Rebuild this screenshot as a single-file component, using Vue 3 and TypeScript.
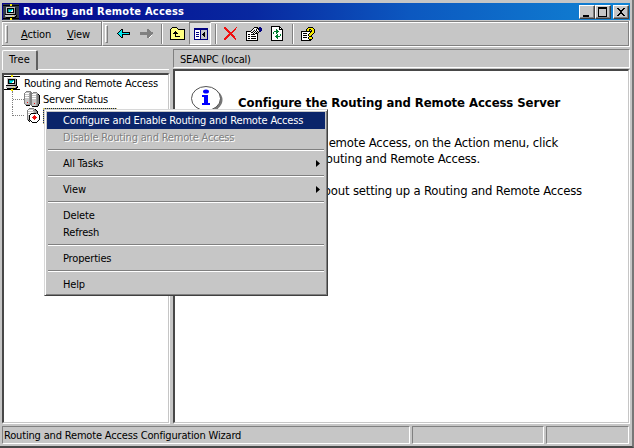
<script setup lang="ts">
import { defineComponent, h } from 'vue'

const palette: Record<string, string> = {
  k: '#000', w: '#fff', g: '#808080', l: '#c6c6c6', y: '#ffff80', Y: '#f5e900',
  c: '#00e8f0', r: '#f01010', b: '#000080', e: '#008030', t: '#009090', s: '#a0a0a0',
}

const icons: Record<string, string[]> = {
  root: [
    '.......YY.......', 'kkkkkkkYYkkkkkkk', '................', '...lllllllll....', '...lkkkkkkksk...',
    '...lkttttcksk...', '...lktcccwksk...', '...lktccwwksk...', '...lkkkkkkksk...', '...lllllllssk...',
    '..kkkkkkkkkkk...', '..lllllllllssk..', '..sllllllYlskk..', '...kkkkkkkkkk...', 'kkkkkkkYYkkkkkkk', '.......YY.......',
  ],
  servers: [
    '..ggggg.........', '.gllllgg.gggg...', 'gwwwwsgggllllg..', 'gllllsggwwwwsgk.', 'gwwwwsggllllsggk',
    'glllssggwwwwsggk', 'gwwwwsggllllsggk', 'gllllsggwwwwsggk', 'gllllsggllllsggk', 'gllllsggllllsggk',
    'gllllsggllllsggk', 'gllrlsggllllsggk', 'gllllsggllrlsggk', '.gssssggllllsgk.', '..kkkk.gllllsgk.', '........kkkkkk..',
  ],
  server: [
    '...ggggg......', '..glllllgk....', '.gwwwwwgsgk...', '.gllllllssgk..', '.gwwwwwlssgk..', '.glllkkkkkgk..',
    '.gwwkwwwwwwwk.', '.glkwwwwrwwwwk', '.glkwwwrrrwwwk', '.glkwwrrrrrwwk', '.glkwwwrrrwwwk', '.gskwwwwrwwwwk',
    '..kgkwwwwwwwk.', '...k.kwwwwwk..', '......kkkkk...',
  ],
  back: [
    '....kk.......', '...kck.......', '..kcck.......', '.kccckkkkkkkk', 'kccccccccccck', '.kccckkkkkkkk', '..kcck.......', '...kck.......', '....kk.......',
  ],
  forward: [
    '.......gg....', '.......ggg...', '.......gggg..', 'ggggggggggggg', 'ggggggggggggg', 'gggggggggggg.', '.......ggggw.', '.......gggw..', '.......ggw...',
  ],
  up: [
    '..kkkkk.........', '.kyyyyyk........', 'kyyyyyyykkkkkkk.', 'kyyyyyyyyyyyyyk.', 'kyyyykyyyyyyyyk.', 'kyyykkkyyyyyyyk.', 'kyykkkkkyyyyyyk.',
    'kyyyykyyyyyyyyk.', 'kyyyykyyyyyyyyk.', 'kyyyykkkkkyyyyk.', 'kyyyyyyyyyyyyyk.', 'kyyyyyyyyyyyyyk.', 'kkkkkkkkkkkkkkk.',
  ],
  panes: [
    'bbbbbbbbbbbbbb', 'bbbbbbbbbbbbbb', 'bwwwwwbllllllb', 'bwwwwwbllllllb', 'bwbbbwblllkllb', 'bwwwwwbllkkllb', 'bwbbbwblkkkllb',
    'bwwwwwbllkkllb', 'bwbbbwblllkllb', 'bwwwwwbllllllb', 'bwwwwwbllllllb', 'bbbbbbbbbbbbbb',
  ],
  remove: [
    'rr..........r', 'rrr........r.', '.rrr......rr.', '..rrr....rr..', '...rrr..rr...', '....rrrrr....', '.....rrr.....',
    '....rrrrr....', '...rrr.rrr...', '..rrr...rrr..', '.rrr.....rr..', 'rrr.......rr.', 'rr.........r.',
  ],
  properties: [
    '........kkkk.bb.', '.......kwwlkkbbb', '......kwlwkwkbbb', '.....kwlkwkwlbbb', 'kkkkkwlkwkwklkb.', 'kwwwwkkwkwklk...',
    'kwwwwwwkwkkk....', 'kwkkwkkkkwwk....', 'kwwwwwwwwwwk....', 'kwkkwkkkkkwk....', 'kwwwwwwwwwwk....', 'kwkkwkkkkkwk....', 'kwwwwwwwwwwk....', 'kkkkkkkkkkkk....',
  ],
  refresh: [
    'kkkkkkkkk....', 'kwwwwwwwkk...', 'kwwwwwwwkwk..', 'kwwwwewwkkkk.', 'kwwwweewwwwk.', 'kwweeeeewwwk.', 'kwewweewwwwk.', 'kwewwewwwwwk.',
    'kwwwwwewwewk.', 'kwwwweewwewk.', 'kwwweeeeewwk.', 'kwwwweewwwwk.', 'kwwwwwewwwwk.', 'kwwwwwwwwwwk.', 'kkkkkkkkkkkk.',
  ],
  help: [
    '.......kkkkk..', '......kYYYYYk.', '.....kYYkkYYYk', '.....kYYk.kYYk', 'kkkkkkkkkkkYYk', 'kwwwwwwwwkYYYk', 'kwkkkkwwkYYYk.',
    'kwwwwwwkYYYk..', 'kwkkkkwkYYk...', 'kwwwwwwwkkk...', 'kwkkkkwkYYYk..', 'kwwwwwwkYYYk..', 'kwwwwwwwkkk...', 'kkkkkkkkkk....',
  ],
}

const PixelIcon = defineComponent({
  props: { name: { type: String, required: true } },
  setup(props) {
    return () => {
      const rows = icons[props.name]
      const w = rows[0].length
      const cells = rows.flatMap((row, y) =>
        [...row].map((ch, x) => (ch === '.' ? null : h('rect', { x, y, width: 1, height: 1, fill: palette[ch] }))),
      )
      return h('svg', { width: w, height: rows.length, viewBox: `0 0 ${w} ${rows.length}`, 'shape-rendering': 'crispEdges' }, cells)
    }
  },
})

interface MenuEntry { label?: string; state?: 'active' | 'disabled'; sub?: boolean }
const menu: MenuEntry[] = [
  { label: 'Configure and Enable Routing and Remote Access', state: 'active' },
  { label: 'Disable Routing and Remote Access', state: 'disabled' },
  {},
  { label: 'All Tasks', sub: true },
  {},
  { label: 'View', sub: true },
  {},
  { label: 'Delete' },
  { label: 'Refresh' },
  {},
  { label: 'Properties' },
  {},
  { label: 'Help' },
]
</script>

<template>
  <div class="window">
    <header class="title">
      <PixelIcon name="root" class="app-icon" />
      <h1>Routing and Remote Access</h1>
      <div class="buttons">
        <button><svg width="12" height="10"><path d="M2 8h6v2H2z" /></svg></button>
        <button><svg width="12" height="10"><path fill-rule="evenodd" d="M1 0h9v10H1zM2 2v7h7V2z" /></svg></button>
        <button class="close"><svg width="12" height="10"><path d="M2 1h2v1h1v1h2V2h1V1h2v1H9v1H8v1H7v2h1v1h1v1h1v1H8V8H7V7H5v1H4v1H2V8h1V7h1V6h1V4H4V3H3V2H2z" /></svg></button>
      </div>
    </header>

    <div class="toolbar">
      <nav class="band menus">
        <i class="grip" />
        <span class="action"><u>A</u>ction</span>
        <span><u>V</u>iew</span>
      </nav>
      <div class="band tools">
        <i class="grip" />
        <PixelIcon name="back" class="t-back" />
        <PixelIcon name="forward" class="t-forward" />
        <i class="sep" />
        <PixelIcon name="up" class="t-up" />
        <span class="pressed"><PixelIcon name="panes" /></span>
        <i class="sep second" />
        <PixelIcon name="remove" class="t-remove" />
        <PixelIcon name="properties" class="t-props" />
        <PixelIcon name="refresh" class="t-refresh" />
        <i class="sep third" />
        <PixelIcon name="help" class="t-help" />
      </div>
    </div>

    <main class="body">
      <section class="left">
        <div class="tabs"><span class="tab">Tree</span><i class="rest" /></div>
        <div class="pane tree">
          <div class="node"><PixelIcon name="root" /><span class="root-label">Routing and Remote Access</span></div>
          <div class="node child"><i class="twig" /><PixelIcon name="servers" /><span>Server Status</span></div>
          <div class="node child last"><i class="twig" /><PixelIcon name="server" class="srv" /><span class="selected" /></div>
        </div>
      </section>
      <section class="right">
        <div class="caption">SEANPC (local)</div>
        <div class="pane detail">
          <div class="heading">
            <svg class="info" width="36" height="29" viewBox="0 0 36 29">
              <ellipse cx="18" cy="15" rx="14.500" ry="11.500" fill="#777" />
              <path d="M22 25l7 3-2-7z" fill="#777" />
              <ellipse cx="16" cy="13.500" rx="14.500" ry="12" fill="#fff" stroke="#555" />
              <ellipse cx="16" cy="6.500" rx="3" ry="2" fill="#00f" />
              <path d="M12 10h6v8h2v2h-8v-2h2v-6h-2z" fill="#00f" />
            </svg>
            <h2>Configure the Routing and Remote Access Server</h2>
          </div>
          <p class="l1">emote Access, on the Action menu, click</p>
          <p class="l2">outing and Remote Access.</p>
          <p class="l3">bout setting up a Routing and Remote Access</p>
        </div>
      </section>
    </main>

    <footer class="status">
      <span>Routing and Remote Access Configuration Wizard</span><span /><span />
    </footer>

    <div class="context">
      <template v-for="(item, i) in menu" :key="i">
        <div v-if="item.label" class="item" :class="item.state">
          <span>{{ item.label }}</span>
          <svg v-if="item.sub" width="4" height="7"><path d="M0 0l4 3.500-4 3.500z" /></svg>
        </div>
        <hr v-else />
      </template>
    </div>
  </div>
</template>

<style>
body { overflow: hidden; background: #c6c6c6; }
</style>

<style scoped>
* { box-sizing: border-box; margin: 0; }
svg { display: block; flex: none; }
.window {
  position: relative; width: 634px; height: 448px; padding: 3px 2px 2px 2px;
  display: flex; flex-direction: column; overflow: hidden;
  background: #c6c6c6; border-right: 2px solid #777; border-bottom: 2px solid #484848;
  font: 11px/17px "DejaVu Sans Condensed", "DejaVu Sans", sans-serif; letter-spacing: -0.16px; color: #000;
}
.title {
  flex: none; width: 628px; height: 17px; display: flex; align-items: center; color: #fff;
  background: linear-gradient(90deg, #04048c 0%, #0828a0 40%, #0c58c0 65%, #1084d4 100%);
}
.app-icon { margin-left: 1px; background: #303848; }
.title h1 { flex: 1; margin-left: 4px; font-size: 11px; line-height: 17px; letter-spacing: 0.22px; }
.buttons { display: flex; margin-right: 1px; }
.buttons button {
  width: 16px; height: 14px; padding: 1px; background: #c6c6c6; border: 1px solid; border-color: #fff #404040 #404040 #fff;
  box-shadow: inset -1px -1px #808080;
}
.buttons .close { margin-left: 2px; }
.toolbar { flex: none; display: flex; width: 628px; height: 26px; margin-top: 1px; border-bottom: 1px solid #fff; border-right: 1px solid #fff; }
.band { display: flex; align-items: center; border: 1px solid #808080; border-width: 1px 1px 1px 0; }
.menus { width: 100px; box-shadow: inset 1px 1px #fff; }
.menus span { padding-top: 1px; }
.tools { flex: 1; border-left: 1px solid #fff; box-shadow: inset 0 1px #fff; }
.grip { width: 3px; height: 18px; margin-left: 3px; flex: none; border: 1px solid; border-color: #fff #808080 #808080 #fff; }
.tools .grip { margin-left: 2px; }
.action { margin: 0 16px 0 13px; }
u { text-underline-offset: 1px; }
.t-back { margin-left: 9px; }
.t-forward { margin-left: 10px; }
.sep { width: 2px; height: 20px; margin-left: 8px; flex: none; border-left: 1px solid #808080; background: #fff; }
.t-up { margin-left: 7px; }
.pressed {
  width: 22px; height: 23px; margin-left: 3px; padding: 5px 0 0 4px; background: #dedede;
  border: 1px solid; border-color: #808080 #fff #fff #808080; flex: none;
}
.second { margin-left: 4px; }
.t-remove { margin-left: 7px; }
.t-props { margin-left: 9px; }
.t-refresh { margin-left: 9px; }
.third { margin-left: 8px; }
.t-help { margin-left: 7px; }
.body { flex: none; display: flex; gap: 4px; width: 629px; height: 374px; margin-top: 2px; }
.left { width: 167px; display: flex; flex-direction: column; }
.tabs { display: flex; height: 24px; padding-top: 1px; }
.tab {
  width: 36px; height: 20px; padding-left: 6px; line-height: 17px; border: 1px solid #fff; border-width: 1px 2px 0 1px;
  border-right-color: #606060; border-radius: 2px 2px 0 0; letter-spacing: 0.1px;
}
.rest { flex: 1; height: 20px; border-bottom: 1px solid #fff; }
.pane {
  background: #fff; border: 1px solid; border-color: #484848 #c6c6c6 #c6c6c6 #484848;
  border-width: 2px 1px 1px 2px; box-shadow: 1px 1px #fff;
}
.tree { flex: 1; }
.node { display: flex; align-items: center; height: 16px; }
.root-label { margin-left: 4px; line-height: 16px; padding-top: 1px; }
.child { margin-left: 8px; border-left: 1px dotted #808080; }
.child span { margin-left: 3px; line-height: 16px; padding-top: 1px; }
.twig { width: 11px; border-top: 1px dotted #808080; }
.last { height: 9px; align-items: flex-start; }
.last .twig { margin-top: 8px; }
.srv { margin: 1px 0 0 2px; }
.child .selected { margin: 1px 0 0 3px; width: 74px; height: 16px; flex: none; background: #0a246a; border: 1px dotted #d0c060; }
.right { width: 457px; display: flex; flex-direction: column; }
.caption { flex: none; height: 19px; padding-left: 6px; line-height: 19px; border: 1px solid; border-color: #808080 #fff #fff #808080; letter-spacing: -0.2px; }
.detail { flex: 1; margin-top: 1px; width: 456px; font-size: 13px; line-height: 16px; letter-spacing: -0.2px; }
.heading { display: flex; height: 58px; padding: 14px 0 0 15px; }
.info { margin-right: 12px; }
h2 { font-size: 13px; line-height: 16px; letter-spacing: -0.08px; margin-top: 10px; white-space: nowrap; }
p { text-align: right; white-space: nowrap; }
.l1 { margin-top: 6px; width: 383px; }
.l2 { width: 305px; }
.l3 { margin-top: 16px; width: 407px; }
.status { flex: none; display: flex; gap: 2px; height: 18px; width: 627px; margin-top: 3px; letter-spacing: -0.17px; }
.status span { border: 1px solid; border-color: #808080 #fff #fff #808080; width: 132px; padding-left: 1px; }
.status span:first-child { width: 409px; }
.status span:last-child { width: 83px; }
.context {
  position: absolute; left: 44px; top: 109px; width: 284px; height: 187px; padding: 2px; background: #c6c6c6;
  border: 1px solid; border-color: #d8d8d8 #404040 #404040 #d8d8d8;
  box-shadow: inset 1px 1px #fff, inset -1px -1px #808080;
}
.item { height: 17px; padding: 0 5px 0 16px; display: flex; align-items: center; justify-content: space-between; line-height: 17px; white-space: nowrap; }
.active { background: #0a246a; color: #fff; }
.disabled { color: #808080; text-shadow: 1px 1px #fff; letter-spacing: -0.2px; }
hr { height: 2px; margin: 3px 1px 4px; border: 0; border-top: 1px solid #808080; background: #fff; }
</style>
